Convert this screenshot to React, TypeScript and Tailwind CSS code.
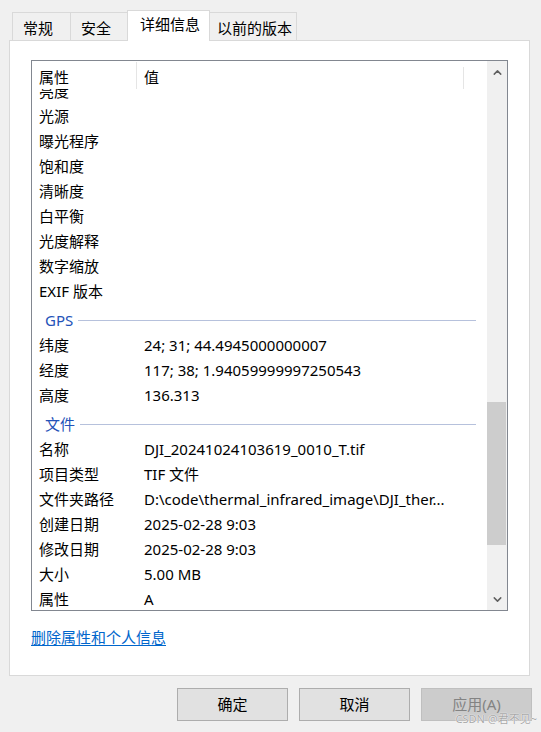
import { ChevronUp, ChevronDown } from "lucide-react";

type Row = { name: string; value?: string };

const cameraRows: Row[] = [
  { name: "亮度" },
  { name: "光源" },
  { name: "曝光程序" },
  { name: "饱和度" },
  { name: "清晰度" },
  { name: "白平衡" },
  { name: "光度解释" },
  { name: "数字缩放" },
  { name: "EXIF 版本" },
];

const gpsRows: Row[] = [
  { name: "纬度", value: "24; 31; 44.4945000000007" },
  { name: "经度", value: "117; 38; 1.94059999997250543" },
  { name: "高度", value: "136.313" },
];

const fileRows: Row[] = [
  { name: "名称", value: "DJI_20241024103619_0010_T.tif" },
  { name: "项目类型", value: "TIF 文件" },
  { name: "文件夹路径", value: "D:\\code\\thermal_infrared_image\\DJI_ther..." },
  { name: "创建日期", value: "2025-02-28 9:03" },
  { name: "修改日期", value: "2025-02-28 9:03" },
  { name: "大小", value: "5.00 MB" },
  { name: "属性", value: "A" },
];

const tabs = [
  { label: "常规", className: "w-[59px] pl-[10px]" },
  { label: "安全", className: "w-[58px] pl-[10px]" },
  { label: "详细信息", className: "w-[83px] pl-[12px]", active: true },
  { label: "以前的版本", className: "w-[88px] pl-[7px]" },
];

function PropRow({ name, value }: Row) {
  return (
    <div className="flex h-[25px] items-center leading-[25px]">
      <div className="w-[104px] shrink-0 pl-[7px]">{name}</div>
      <div className="w-[327px] truncate pl-[8px] pr-[6px]">{value}</div>
    </div>
  );
}

function GroupHeader({ label }: { label: string }) {
  return (
    <div className="flex h-[29px] items-center pt-[4px] pl-[13px] pr-[11px]">
      <span className="leading-none text-[#2352b8]">{label}</span>
      <div className="ml-[5px] h-px flex-1 bg-[#b6c1dc]" />
    </div>
  );
}

function Button({ label, disabled }: { label: string; disabled?: boolean }) {
  return (
    <button
      className={
        disabled
          ? "h-[33px] w-[111px] border border-[#bfbfbf] bg-[#cccccc] text-[#838383]"
          : "h-[33px] w-[111px] border border-[#adadad] bg-[#e1e1e1] text-black"
      }
    >
      {label}
    </button>
  );
}

export default function App() {
  return (
    <div className="relative h-[732px] w-[541px] overflow-hidden bg-[#f0f0f0] font-['Noto_Sans','Noto_Sans_CJK_SC',sans-serif] text-[15px] text-black">
      <div className="flex items-end pl-[12px] pt-[10px]">
        {tabs.map((t) =>
          t.active ? (
            <div
              key={t.label}
              className={`relative z-10 -mb-px -ml-px h-[31px] border border-b-0 border-[#d9d9d9] bg-white pt-[3px] leading-[20px] ${t.className}`}
            >
              {t.label}
            </div>
          ) : (
            <div
              key={t.label}
              className={`-ml-px h-[28px] border border-b-0 border-[#d9d9d9] bg-[#f0f0f0] pt-[5px] leading-[20px] first:ml-0 ${t.className}`}
            >
              {t.label}
            </div>
          )
        )}
      </div>

      <div className="mx-[9px] h-[636px] w-[521px] border border-[#d9d9d9] bg-white pl-[21px] pt-[19px]">
        <div className="flex h-[551px] w-[477px] border border-[#828790] bg-white">
          <div className="flex min-w-0 flex-1 flex-col">
            <div className="flex h-[28px] shrink-0 items-stretch">
              <div className="w-[104px] pl-[7px] pt-[6px] leading-[20px]">属性</div>
              <div className="mt-px w-px bg-[#e5e5e5]" />
              <div className="w-[326px] pl-[7px] pt-[6px] leading-[20px]">值</div>
              <div className="mt-[6px] w-px bg-[#e5e5e5]" />
            </div>
            <div className="flex-1 overflow-hidden">
              <div className="-mt-[10px]">
                {cameraRows.map((r) => (
                  <PropRow key={r.name} {...r} />
                ))}
                <GroupHeader label="GPS" />
                {gpsRows.map((r) => (
                  <PropRow key={r.name} {...r} />
                ))}
                <GroupHeader label="文件" />
                {fileRows.map((r) => (
                  <PropRow key={r.name} {...r} />
                ))}
              </div>
            </div>
          </div>

          <div className="flex w-[20px] shrink-0 flex-col bg-[#f0f0f0]">
            <div className="flex h-[22px] items-center justify-center text-[#606060]">
              <ChevronUp size={13} strokeWidth={2.75} />
            </div>
            <div className="flex-1">
              <div className="mt-[319px] h-[143px] w-[19px] bg-[#cdcdcd]" />
            </div>
            <div className="flex h-[22px] items-center justify-center text-[#606060]">
              <ChevronDown size={13} strokeWidth={2.75} />
            </div>
          </div>
        </div>

        <a className="mt-[16px] inline-block leading-[20px] text-[#0066cc] underline underline-offset-2">
          删除属性和个人信息
        </a>
      </div>

      <div className="mt-[12px] flex justify-end gap-[11px] pr-[9px]">
        <Button label="确定" />
        <Button label="取消" />
        <Button label="应用(A)" disabled />
      </div>

      <div className="absolute bottom-[8px] right-[4px] text-[11px] leading-none text-[#a8a8a8] [text-shadow:0_0_1px_#ffffff,0_0_1px_#ffffff]">
        CSDN @君不见~
      </div>
    </div>
  );
}
